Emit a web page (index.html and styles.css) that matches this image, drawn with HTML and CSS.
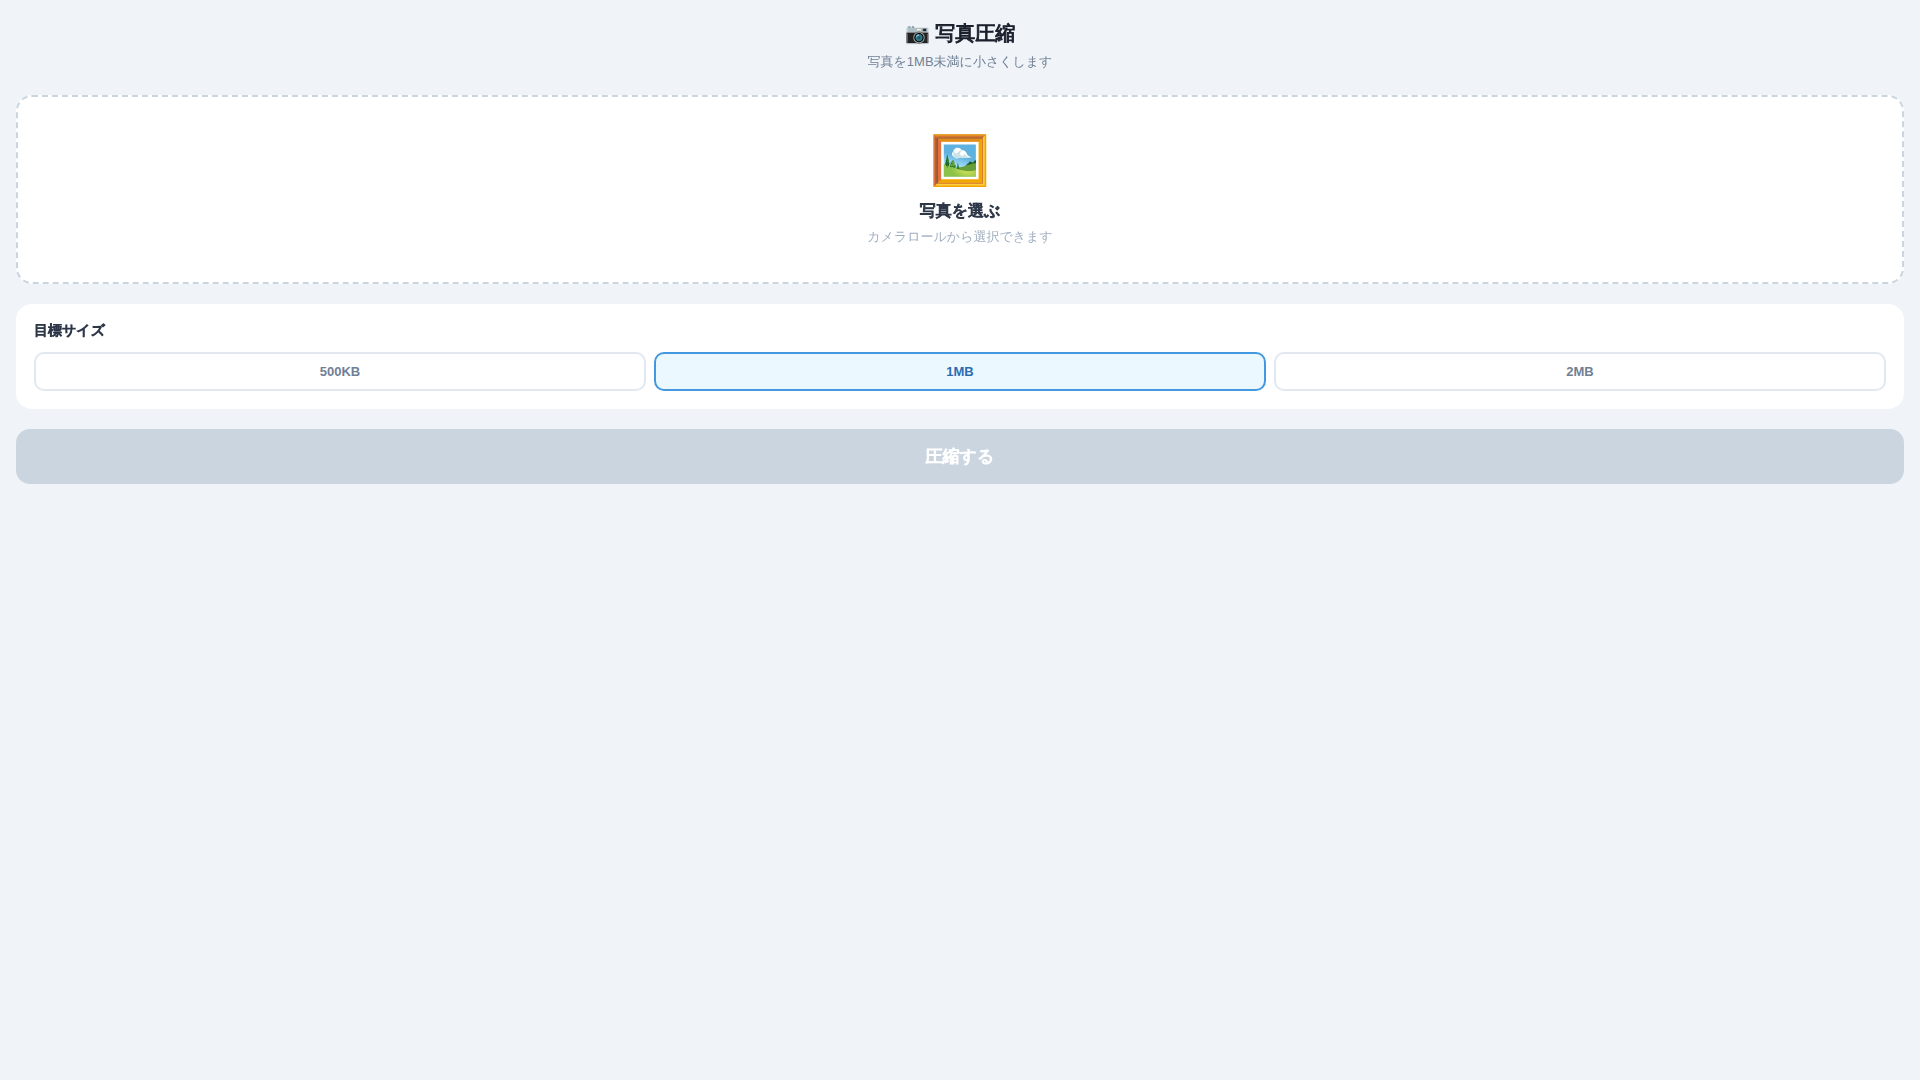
FILE: index.html
```html
<!DOCTYPE html>
<html lang="ja">
<head>
<meta charset="UTF-8">
<meta name="viewport" content="width=device-width, initial-scale=1">
<title>写真圧縮</title>
<link rel="stylesheet" href="styles.css">
</head>
<body>
<header class="header">
  <h1 class="title">📷 <span class="heavy">写真圧縮</span></h1>
  <p class="subtitle">写真を1MB未満に小さくします</p>
</header>
<main class="main">
  <button type="button" class="picker">
    <span class="picker-icon">🖼️</span>
    <span class="picker-label heavy">写真を選ぶ</span>
    <span class="picker-hint">カメラロールから選択できます</span>
  </button>
  <section class="card">
    <h2 class="card-title heavy">目標サイズ</h2>
    <div class="sizes">
      <button type="button" class="size">500KB</button>
      <button type="button" class="size size-active">1MB</button>
      <button type="button" class="size">2MB</button>
    </div>
  </section>
  <button type="button" class="submit heavy" disabled>圧縮する</button>
</main>
</body>
</html>
```
FILE: styles.css
```css
* { box-sizing: border-box; margin: 0; padding: 0; }
body {
  min-height: 100vh;
  padding: 20px 16px;
  background: #f0f4f8;
  color: #1a202c;
  font-family: "Liberation Sans", "WenQuanYi Zen Hei", "Noto Sans CJK JP", sans-serif;
}
button { font-family: inherit; }
/* The Japanese face has no bold cut, so its headings are thickened here */
.heavy { -webkit-text-stroke: 1px currentColor; }
.header { margin-bottom: 24px; text-align: center; }
.title { font-size: 20px; line-height: 26px; font-weight: 700; }
.subtitle { margin-top: 6px; color: #718096; font-size: 13px; line-height: 19px; }
.main { display: flex; flex-direction: column; gap: 20px; }
.picker {
  display: flex;
  flex-direction: column;
  align-items: center;
  padding: 36px 20px;
  border: 2px dashed #cbd5e0;
  border-radius: 16px;
  background: #fff;
}
.picker-icon { margin-bottom: 12px; font-size: 48px; line-height: 56px; }
.picker-label { color: #2d3748; font-size: 16px; line-height: 20px; font-weight: 700; }
.picker-hint { margin-top: 6px; color: #a0aec0; font-size: 13px; line-height: 19px; }
.card { padding: 18px; border-radius: 16px; background: #fff; }
.card-title { margin-bottom: 14px; color: #2d3748; font-size: 14px; line-height: 16px; font-weight: 700; }
.sizes { display: grid; grid-template-columns: repeat(3, 1fr); gap: 8px; }
.size {
  padding: 10px;
  border: 2px solid #e2e8f0;
  border-radius: 10px;
  background: #fff;
  color: #718096;
  font-size: 13px;
  font-weight: 700;
}
.size-active { border-color: #4299e1; background: #ebf8ff; color: #2b6cb0; }
.submit {
  padding: 16px;
  border: 0;
  border-radius: 14px;
  background: #cbd5e0;
  color: #fff;
  font-size: 17px;
  line-height: 23px;
  font-weight: 700;
}
```
